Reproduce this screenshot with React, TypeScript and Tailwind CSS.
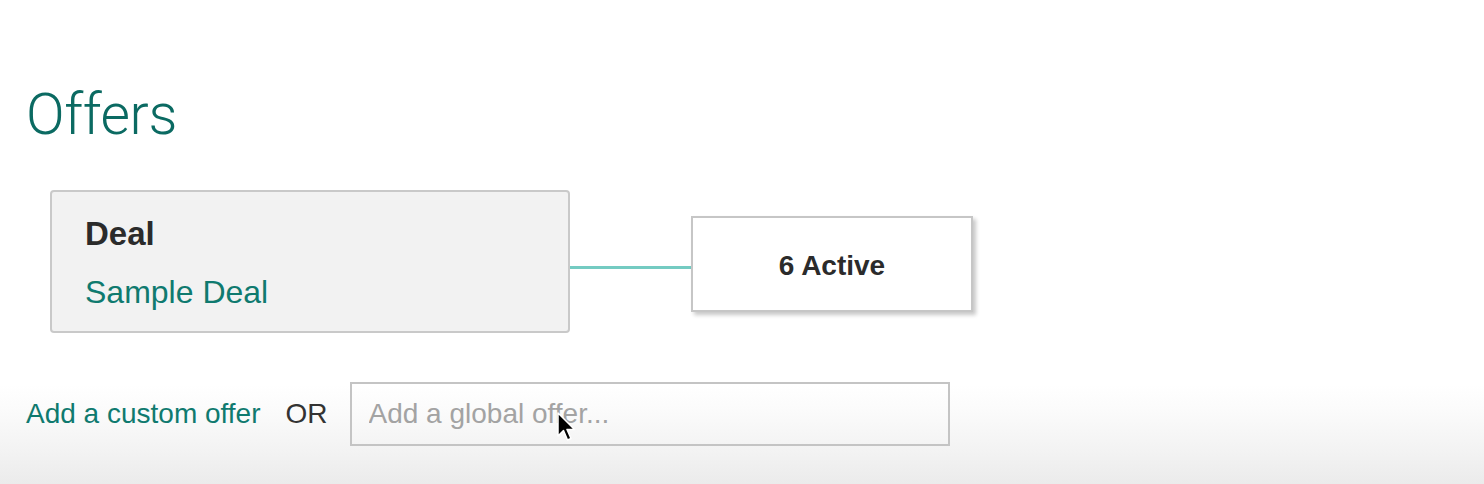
import React from 'react';

const font = { fontFamily: '"Liberation Sans", Arial, sans-serif' };

function Cursor() {
  return (
    <svg
      className="absolute left-[556px] top-[412px] pointer-events-none"
      width="22"
      height="34"
      viewBox="0 0 22 34"
    >
      <path
        d="M2 1 L2 24 L7.5 18.5 L11.5 28 L15 26.5 L11 17.5 L18.5 17.5 Z"
        fill="#000"
        stroke="#fff"
        strokeWidth="1.5"
        strokeLinejoin="round"
      />
    </svg>
  );
}

export default function App() {
  return (
    <div
      className="relative h-[484px] w-full overflow-hidden bg-[linear-gradient(to_bottom,#ffffff_0px,#ffffff_385px,#fbfbfb_410px,#f3f3f3_450px,#ebebeb_484px)]"
      style={font}
    >
      <div className="pl-[26px] pt-[86px]">
        <h1
          className="text-[57px] leading-none font-light text-[#0b6a62] tracking-[-0.4px]"
          style={{ fontFamily: 'Roboto, "Liberation Sans", sans-serif' }}
        >
          Offers
        </h1>

        {/* deal → status */}
        <div className="mt-[47px] ml-[24px] flex items-start">
          <div className="w-[520px] h-[143px] rounded-[4px] border-2 border-[#c9c9c9] bg-[#f2f2f2] pl-[33px] pt-[23px]">
            <div className="text-[33px] leading-[38px] font-bold text-[#2b2b2b]">Deal</div>
            <div className="mt-[21px] text-[32px] leading-[36px] text-[#0f7a6f]">Sample Deal</div>
          </div>
          <div className="mt-[76px] h-[3px] w-[121px] bg-[#74cbc2]" />
          <div className="mt-[26px] w-[282px] h-[96px] border-2 border-[#c6c6c6] bg-white shadow-[3px_3px_4px_rgba(0,0,0,0.22)] flex items-center justify-center">
            <span className="text-[28px] leading-none font-bold text-[#2b2b2b] pt-[3px]">6 Active</span>
          </div>
        </div>

        {/* add row */}
        <div className="mt-[49px] flex items-center">
          <a href="#" className="text-[28px] text-[#0f7a6f]">Add a custom offer</a>
          <span className="ml-[25px] text-[28px] text-[#333]">OR</span>
          <input
            type="text"
            placeholder="Add a global offer..."
            className="ml-[22px] w-[600px] h-[64px] border-2 border-[#c4c4c4] bg-transparent px-[17px] text-[28px] text-[#333] placeholder:text-[#a3a3a3] outline-none"
            style={font}
          />
        </div>
      </div>
      <Cursor />
    </div>
  );
}
